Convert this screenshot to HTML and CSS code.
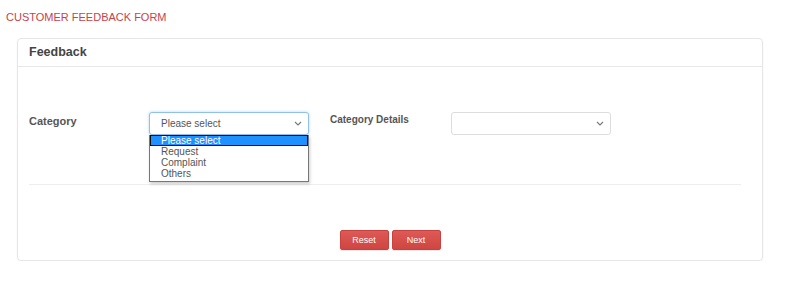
FILE: index.html
```html
<!DOCTYPE html>
<html lang="en">
<head>
  <meta charset="UTF-8">
  <meta name="viewport" content="width=device-width, initial-scale=1.0">
  <title>Customer Feedback Form</title>
  <link rel="stylesheet" href="styles.css">
</head>
<body>
  <h1 class="page-title">CUSTOMER FEEDBACK FORM</h1>
  <div class="panel">
    <div class="panel-heading">Feedback</div>
    <div class="panel-body">
      <div class="form-row">
        <label class="field-label">Category</label>
        <div class="select-wrap">
          <div class="fake-select focused">
            <span>Please select</span>
            <svg class="caret" width="8" height="5" viewBox="0 0 8 5"><path d="M1 1l3 3 3-3" fill="none" stroke="#777" stroke-width="1.1"/></svg>
          </div>
          <ul class="dropdown">
            <li class="active">Please select</li>
            <li>Request</li>
            <li>Complaint</li>
            <li>Others</li>
          </ul>
        </div>
        <label class="field-label details">Category Details</label>
        <div class="select-wrap">
          <div class="fake-select">
            <span></span>
            <svg class="caret" width="8" height="5" viewBox="0 0 8 5"><path d="M1 1l3 3 3-3" fill="none" stroke="#777" stroke-width="1.1"/></svg>
          </div>
        </div>
      </div>
      <hr class="divider">
      <div class="actions">
        <button type="reset" class="btn">Reset</button>
        <button type="button" class="btn">Next</button>
      </div>
    </div>
  </div>
</body>
</html>
```

FILE: styles.css
```css
body {
  margin: 0;
  padding: 10px 0 0 0;
  font-family: 'Liberation Sans', Arial, sans-serif;
  background: #fff;
  color: #555;
}
.page-title {
  margin: 0 0 0 6px;
  font-size: 11px;
  font-weight: normal;
  line-height: 14px;
  color: #c9424a;
}
.panel {
  width: 744px;
  margin: 14px 0 0 17px;
  border: 1px solid #e6e6e6;
  border-radius: 4px;
  box-shadow: 0 1px 2px rgba(0,0,0,0.05);
}
.panel-heading {
  height: 27px;
  line-height: 27px;
  padding: 0 11px;
  border-bottom: 1px solid #e8e8e8;
  font-size: 12.5px;
  font-weight: bold;
  color: #444;
}
.panel-body {
  padding: 45px 21px 10px 11px;
}
.form-row {
  display: grid;
  grid-template-columns: 120px 160px 142px 160px;
  align-items: start;
}
.field-label {
  font-size: 11px;
  font-weight: bold;
  color: #555;
  padding-top: 3px;
}
.field-label.details {
  margin-left: 21px;
  font-size: 10px;
  padding-top: 2px;
}
.select-wrap {
  position: relative;
}
.fake-select {
  height: 21px;
  border: 1px solid #ddd;
  border-radius: 3px;
  display: flex;
  align-items: center;
  justify-content: space-between;
  padding: 0 6px 0 11px;
  font-size: 10px;
  color: #555;
  background: #fff;
}
.fake-select.focused {
  border-color: #8fc1ea;
  box-shadow: 0 0 3px rgba(102,175,233,0.5);
}
.caret {
  flex: none;
}
.dropdown {
  position: absolute;
  top: 23px;
  left: 0;
  width: 158px;
  margin: 0;
  padding: 0 0 2px 0;
  list-style: none;
  background: #fff;
  border: 1px solid #777;
  border-top: none;
  box-shadow: 1px 2px 3px rgba(0,0,0,0.2);
  font-size: 10px;
  color: #555;
  z-index: 2;
}
.dropdown li {
  height: 11px;
  line-height: 11px;
  padding-left: 11px;
}
.dropdown li.active {
  background: #1e90ff;
  color: #fff;
  outline: 1px solid #111;
  outline-offset: -1px;
}
.divider {
  margin: 49px 0 0 0;
  border: none;
  border-top: 1px solid #eee;
}
.actions {
  display: flex;
  justify-content: center;
  gap: 3px;
  margin-top: 45px;
  padding-left: 10px;
}
.btn {
  width: 49px;
  height: 20px;
  border: 1px solid #c9403c;
  border-radius: 2px;
  background: linear-gradient(#dd5a56, #cf4541);
  color: #fff;
  font-family: 'Liberation Sans', Arial, sans-serif;
  font-size: 9px;
  padding: 0;
  box-shadow: 0 1px 1px rgba(0,0,0,0.1);
}
```
